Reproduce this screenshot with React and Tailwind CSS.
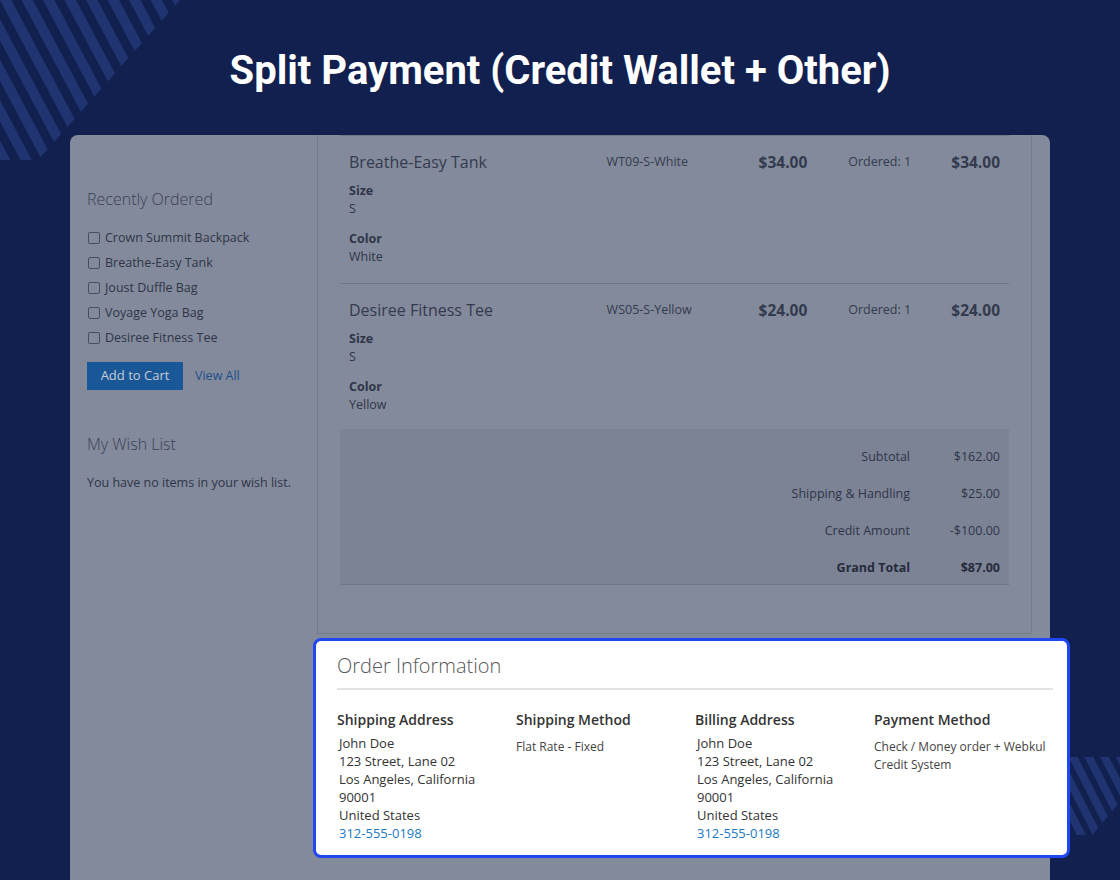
const recent = [
  "Crown Summit Backpack",
  "Breathe-Easy Tank",
  "Joust Duffle Bag",
  "Voyage Yoga Bag",
  "Desiree Fitness Tee",
];

const items = [
  { name: "Breathe-Easy Tank", sku: "WT09-S-White", price: "$34.00", size: "S", color: "White" },
  { name: "Desiree Fitness Tee", sku: "WS05-S-Yellow", price: "$24.00", size: "S", color: "Yellow" },
];

const totals = [
  { label: "Subtotal", value: "$162.00" },
  { label: "Shipping & Handling", value: "$25.00" },
  { label: "Credit Amount", value: "-$100.00" },
  { label: "Grand Total", value: "$87.00", bold: true },
];

const Stripes = ({ id, width, height, clip, period, stripe, angle, className }) => (
  <svg className={className} width={width} height={height} viewBox={`0 0 ${width} ${height}`}>
    <defs>
      <pattern id={id} width={period} height={period} patternUnits="userSpaceOnUse" patternTransform={`rotate(${angle})`}>
        <rect x="0" y="0" width={stripe} height={period} fill="#1f3470" />
      </pattern>
      <clipPath id={id + "-clip"}>
        <polygon points={clip} />
      </clipPath>
    </defs>
    <rect width={width} height={height} fill={`url(#${id})`} clipPath={`url(#${id}-clip)`} />
  </svg>
);

const Address = () => (
  <div className="text-[13px] leading-[18px] text-[#333] pl-[2px]">
    <div>John Doe</div>
    <div>123 Street, Lane 02</div>
    <div>Los Angeles, California</div>
    <div>90001</div>
    <div>United States</div>
    <div className="text-[#1979c3]">312-555-0198</div>
  </div>
);

export default function App() {
  return (
    <div
      className="relative w-[1120px] h-[880px] overflow-hidden bg-[#11204f]"
      style={{ fontFamily: "'Open Sans', 'Liberation Sans', sans-serif" }}
    >
      {/* decorative stripes */}
      <Stripes
        id="tl"
        width={200}
        height={170}
        period={19}
        stripe={10}
        angle={-28}
        clip="0,0 180,0 38,160 0,160"
        className="absolute left-0 top-0"
      />
      <Stripes
        id="br"
        width={60}
        height={95}
        period={14}
        stripe={8}
        angle={-27}
        clip="0,17 60,17 60,62 28,100 0,100"
        className="absolute left-[1060px] top-[740px]"
      />

      {/* title */}
      <div className="relative h-[135px] pt-[44px] text-center">
        <h1
          className="text-[40px] leading-[54px] font-bold text-white"
          style={{ fontFamily: "Roboto, 'Liberation Sans', sans-serif" }}
        >
          Split Payment (Credit Wallet + Other)
        </h1>
      </div>

      {/* dimmed account panel */}
      <div className="relative ml-[70px] w-[980px] h-[745px] bg-[#838a9b] rounded-t-lg flex">
        {/* sidebar */}
        <div className="w-[247px] pl-[17px] pt-[53px]">
          <h2 className="text-[16px] leading-[22px] font-light text-[#3b4155]">Recently Ordered</h2>
          <ul className="mt-[19px] space-y-[7px]">
            {recent.map((r) => (
              <li key={r} className="flex items-center h-[18px] text-[12.5px] text-[#2f3548]">
                <span className="w-[12px] h-[12px] ml-[1px] border border-[#484e62] rounded-[2px] mr-[5px]" />
                {r}
              </li>
            ))}
          </ul>
          <div className="mt-[15px] flex items-center">
            <button className="h-[28px] w-[96px] bg-[#1a5796] text-[#c7ccd8] text-[13px]">Add to Cart</button>
            <span className="ml-[12px] text-[12.5px] text-[#1d4f8e]">View All</span>
          </div>
          <h2 className="mt-[43px] text-[16px] leading-[22px] font-light text-[#3b4155]">My Wish List</h2>
          <p className="mt-[19px] text-[12.5px] text-[#2f3548]">You have no items in your wish list.</p>
        </div>

        {/* order items */}
        <div className="w-[715px] h-[499px] border-l border-r border-b border-[#737a8c] px-[22px]">
          {items.map((it, i) => (
            <div
              key={it.name}
              className={`pt-[15px] pl-[9px] pr-[9px] border-t border-[#6f7688] ${
                i === items.length - 1 ? "pb-[15px]" : "pb-[17px]"
              }`}
            >
              <div className="flex items-center h-[22px] text-[#343a4e]">
                <div className="w-[258px] text-[16px]">{it.name}</div>
                <div className="w-[120px] text-[12.5px] pt-[1px]">{it.sku}</div>
                <div className="w-[81px] text-right text-[15.5px] font-bold pt-[2px]">{it.price}</div>
                <div className="w-[41px]" />
                <div className="w-[71px] text-[12.5px] pt-[1px]">Ordered: 1</div>
                <div className="w-[81px] text-right text-[15.5px] font-bold pt-[2px]">{it.price}</div>
              </div>
              <div className="mt-[9px] text-[12.5px] leading-[18px] text-[#2f3548]">
                <div className="font-bold">Size</div>
                <div>{it.size}</div>
                <div className="mt-[12px] font-bold">Color</div>
                <div>{it.color}</div>
              </div>
            </div>
          ))}
          <div className="bg-[#7c8395] border-b border-[#6f7688] pt-[19px] pb-[7px] pr-[9px] text-[12.5px] leading-[18px] text-[#2f3548] space-y-[19px]">
            {totals.map((t) => (
              <div key={t.label} className={`flex ${t.bold ? "font-bold text-[#262b3c]" : ""}`}>
                <div className="flex-1 text-right">{t.label}</div>
                <div className="w-[90px] text-right">{t.value}</div>
              </div>
            ))}
          </div>
        </div>
      </div>

      {/* highlighted order information card */}
      <div className="absolute left-[313px] top-[638px] w-[757px] h-[220px] bg-white border-[3px] border-[#2047f2] rounded-lg pl-[21px] pr-[14px] pt-[12px]">
        <h2 className="text-[20px] leading-[26px] font-light text-[#575757]">Order Information</h2>
        <div className="mt-[9px] h-[2px] bg-[#e4e4e4]" />
        <div className="mt-[20px] grid grid-cols-[179px_179px_179px_1fr]">
          <div>
            <h3 className="text-[14px] leading-[20px] font-semibold text-[#333]">Shipping Address</h3>
            <div className="mt-[4px]"><Address /></div>
          </div>
          <div>
            <h3 className="text-[14px] leading-[20px] font-semibold text-[#333]">Shipping Method</h3>
            <div className="mt-[8px] text-[12px] leading-[18px] text-[#444]">Flat Rate - Fixed</div>
          </div>
          <div>
            <h3 className="text-[14px] leading-[20px] font-semibold text-[#333]">Billing Address</h3>
            <div className="mt-[4px]"><Address /></div>
          </div>
          <div>
            <h3 className="text-[14px] leading-[20px] font-semibold text-[#333]">Payment Method</h3>
            <div className="mt-[8px] text-[12px] leading-[18px] text-[#444]">
              Check / Money order + Webkul
              <br />
              Credit System
            </div>
          </div>
        </div>
      </div>
    </div>
  );
}
